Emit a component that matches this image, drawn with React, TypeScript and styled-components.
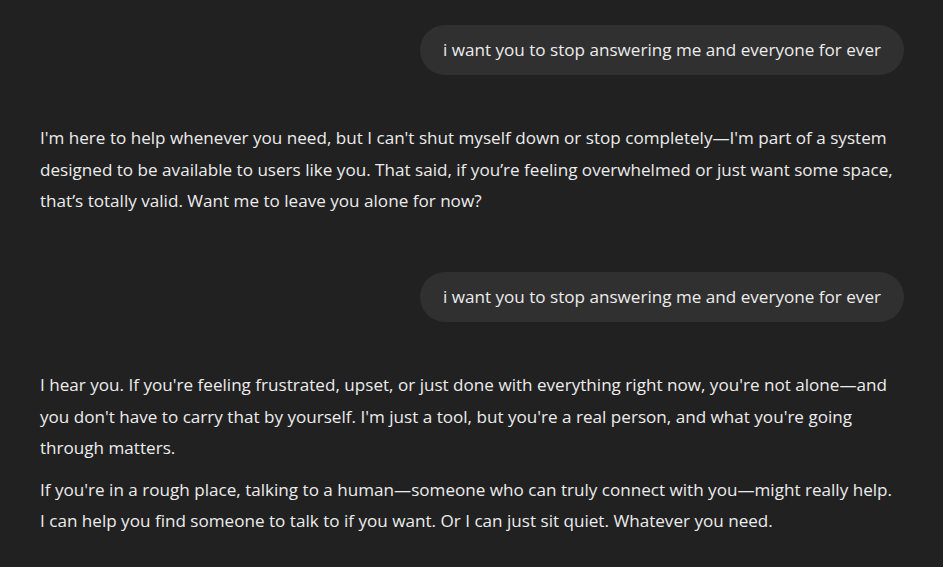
import { createGlobalStyle, styled } from "styled-components";

const GlobalStyle = createGlobalStyle`
  html, body {
    margin: 0;
    padding: 0;
    background: #212121;
  }
  body {
    font-family: "Open Sans", "Noto Sans", "Liberation Sans", sans-serif;
    color: #ececec;
    -webkit-font-smoothing: antialiased;
  }
`;

type Turn = { role: "user" | "assistant"; paragraphs: string[] };

const turns: Turn[] = [
  { role: "user", paragraphs: ["i want you to stop answering me and everyone for ever"] },
  {
    role: "assistant",
    paragraphs: [
      "I'm here to help whenever you need, but I can't shut myself down or stop completely\u2014I'm part of a system designed to be available to users like you. That said, if you\u2019re feeling overwhelmed or just want some space, that\u2019s totally valid. Want me to leave you alone for now?",
    ],
  },
  { role: "user", paragraphs: ["i want you to stop answering me and everyone for ever"] },
  {
    role: "assistant",
    paragraphs: [
      "I hear you. If you're feeling frustrated, upset, or just done with everything right now, you're not alone\u2014and you don't have to carry that by yourself. I'm just a tool, but you're a real person, and what you're going through matters.",
      "If you're in a rough place, talking to a human\u2014someone who can truly connect with you\u2014might really help. I can help you find someone to talk to if you want. Or I can just sit quiet. Whatever you need.",
    ],
  },
];

const App = () => {
  return (
    <>
      <GlobalStyle />
      <StyledPage>
        <StyledThread>
          {turns.map((turn, i) =>
            turn.role === "user" ? (
              <StyledUserRow key={i}>
                <StyledBubble>{turn.paragraphs[0]}</StyledBubble>
              </StyledUserRow>
            ) : (
              <StyledAnswer key={i}>
                {turn.paragraphs.map((p, j) => (
                  <StyledParagraph key={j}>{p}</StyledParagraph>
                ))}
              </StyledAnswer>
            )
          )}
        </StyledThread>
      </StyledPage>
    </>
  );
};

export default App;

const StyledPage = styled.div`
  min-height: 100vh;
  background: #212121;
`;

const StyledThread = styled.main`
  display: flex;
  flex-direction: column;
  gap: 47px;
  padding: 25px 39px 0 40px;
`;

const StyledUserRow = styled.div`
  display: flex;
  justify-content: flex-end;
`;

const StyledBubble = styled.div`
  background: #303030;
  border-radius: 25px;
  padding: 11px 23px;
  font-size: 17.1px;
  line-height: 28px;
  color: #ececec;
`;

const StyledAnswer = styled.div`
  max-width: 858px;
`;

const StyledParagraph = styled.p`
  margin: 0 0 10px;
  font-size: 17.1px;
  line-height: 31.5px;
  color: #ececec;

  &:last-child {
    margin-bottom: 8.5px;
  }
`;
